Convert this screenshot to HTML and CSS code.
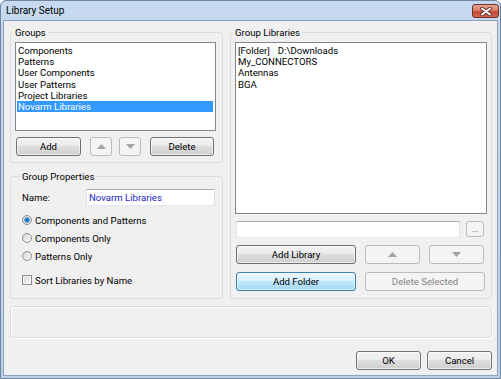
FILE: index.html
```html
<!DOCTYPE html>
<html lang="en">
  <head>
    <meta charset="UTF-8" />
    <title>Library Setup</title>
    <link rel="stylesheet" href="styles.css">
  </head>
  <body>
    <div class="window">
      <div class="titlebar">
        <span class="title">Library Setup</span>
        <button class="close-btn">
          <svg width="12" height="9" viewBox="0 0 12 9">
            <path d="M2 1.5 L10 7.5 M10 1.5 L2 7.5" stroke="#5a2a24" stroke-width="3.6" stroke-linecap="round" />
            <path d="M2 1.5 L10 7.5 M10 1.5 L2 7.5" stroke="#fff" stroke-width="2" stroke-linecap="round" />
          </svg>
        </button>
      </div>

      <div class="client">
        <div class="main">
          <div class="left-col">
            <fieldset class="group groups-box">
              <legend>Groups</legend>
              <ul class="listbox groups-list">
                <li>Components</li>
                <li>Patterns</li>
                <li>User Components</li>
                <li>User Patterns</li>
                <li>Project Libraries</li>
                <li class="selected">Novarm Libraries</li>
              </ul>
              <div class="groups-buttons">
                <button class="btn btn-add">Add</button>
                <button class="btn btn-disabled btn-arrow">
                  <svg width="9" height="5" viewBox="0 0 9 5"><polygon points="0,5 9,5 4.5,0" fill="#a3a3a3" /></svg>
                </button>
                <button class="btn btn-disabled btn-arrow">
                  <svg width="9" height="5" viewBox="0 0 9 5"><polygon points="0,0 9,0 4.5,5" fill="#a3a3a3" /></svg>
                </button>
                <button class="btn btn-delete">Delete</button>
              </div>
            </fieldset>

            <fieldset class="group props-box">
              <legend>Group Properties</legend>
              <div class="name-row">
                <span class="name-label">Name:</span>
                <input class="textbox name-input" type="text" value="Novarm Libraries" />
              </div>
              <div class="options">
                <div class="option"><span class="radio checked"></span>Components and Patterns</div>
                <div class="option"><span class="radio"></span>Components Only</div>
                <div class="option"><span class="radio"></span>Patterns Only</div>
              </div>
              <div class="option sort-option"><span class="checkbox"></span>Sort Libraries by Name</div>
            </fieldset>
          </div>

          <fieldset class="group libs-box">
            <legend>Group Libraries</legend>
            <ul class="listbox libs-list">
              <li>[Folder]<span class="folder-path">D:\Downloads</span></li>
              <li>My_CONNECTORS</li>
              <li>Antennas</li>
              <li>BGA</li>
            </ul>
            <div class="path-row">
              <input class="textbox path-input" type="text" value="" />
              <button class="btn btn-disabled btn-browse">...</button>
            </div>
            <div class="libs-buttons">
              <button class="btn btn-wide">Add Library</button>
              <button class="btn btn-disabled btn-move">
                <svg width="9" height="5" viewBox="0 0 9 5"><polygon points="0,5 9,5 4.5,0" fill="#a3a3a3" /></svg>
              </button>
              <button class="btn btn-disabled btn-move">
                <svg width="9" height="5" viewBox="0 0 9 5"><polygon points="0,0 9,0 4.5,5" fill="#a3a3a3" /></svg>
              </button>
            </div>
            <div class="libs-buttons second">
              <button class="btn btn-wide btn-focus">Add Folder</button>
              <button class="btn btn-disabled btn-wide">Delete Selected</button>
            </div>
          </fieldset>
        </div>

        <div class="status-panel"></div>

        <div class="dialog-buttons">
          <button class="btn btn-dialog">OK</button>
          <button class="btn btn-dialog">Cancel</button>
        </div>
      </div>
    </div>
  </body>
</html>
```

FILE: styles.css
```css
* {
  box-sizing: border-box;
}
body {
  margin: 0;
  font-family: Roboto, "Liberation Sans", sans-serif;
  font-size: 9.6px;
  color: #000;
  background: #fff;
}
.window {
  width: 501px;
  height: 379px;
  display: flex;
  flex-direction: column;
  padding: 0 2px 2px;
  background: linear-gradient(#c6d9ee, #bcd2ea);
  border: 1px solid #6f859e;
  border-radius: 6px 6px 0 0;
}
.titlebar {
  height: 19px;
  display: flex;
  justify-content: space-between;
  align-items: flex-start;
  padding-left: 3px;
}
.title {
  font-size: 10px;
  line-height: 19px;
}
.close-btn {
  width: 27px;
  height: 14px;
  margin-top: 3px;
  margin-right: -1px;
  padding: 0;
  display: flex;
  align-items: center;
  justify-content: center;
  border: 1px solid #6e3128;
  border-radius: 3px;
  background: linear-gradient(#e9a595, #d97c68 45%, #c54b35 55%, #d0654f);
}
.client {
  flex: 1;
  background: #f0f0f0;
  border: 1px solid #8ea3bb;
  padding: 5px 5px 0 6px;
}
.main {
  display: grid;
  grid-template-columns: 213px 262px;
  column-gap: 7px;
}
.left-col {
  display: flex;
  flex-direction: column;
  gap: 7px;
}
.group {
  margin: 0;
  min-width: 0;
  border: 1px solid #d5dfe5;
  border-radius: 3px;
}
.group legend {
  padding: 0 2px;
  margin-left: -2px;
  line-height: 13px;
}
.groups-box {
  padding: 3px 6px 6px 4px;
}
.listbox {
  list-style: none;
  margin: 0;
  padding: 2px 1px;
  background: #fff;
  border: 1px solid #828790;
  overflow: hidden;
}
.listbox li {
  height: 11.2px;
  line-height: 11.2px;
  padding-left: 1px;
  white-space: nowrap;
}
.listbox li.selected {
  background: #3399ff;
  color: #fff;
  margin-right: 1px;
}
.groups-list {
  height: 89px;
}
.groups-buttons {
  display: flex;
  margin-top: 6px;
  padding-left: 1px;
}
.btn {
  height: 19px;
  padding: 0;
  font: inherit;
  color: #000;
  border: 1px solid #707070;
  border-radius: 3px;
  background: linear-gradient(#f2f2f2, #ebebeb 45%, #dddddd 50%, #cfcfcf);
  box-shadow: inset 0 0 0 1px rgba(255, 255, 255, 0.6);
  display: flex;
  align-items: center;
  justify-content: center;
}
.btn-disabled {
  color: #838383;
  border-color: #b8bcbf;
  background: #f4f4f4;
  box-shadow: none;
}
.btn-focus {
  border-color: #3c7fb1;
  background: linear-gradient(#eaf6fd, #d9f0fc 45%, #bee6fd 50%, #a7d9f5);
  box-shadow: inset 0 0 0 1px rgba(255, 255, 255, 0.5);
}
.btn-add {
  width: 65px;
}
.btn-arrow {
  width: 22px;
  margin-left: 9px;
}
.btn-arrow + .btn-arrow {
  margin-left: 7px;
}
.btn-delete {
  width: 64px;
  margin-left: 9px;
}
.props-box {
  padding: 6px 6px 9px 11px;
}
.name-row {
  display: flex;
  align-items: center;
}
.name-label {
  width: 64px;
}
.textbox {
  height: 17px;
  margin: 0;
  padding: 0 2px;
  font: inherit;
  background: #fff;
  border: 1px solid #abadb3;
  border-color: #abadb3 #dbdfe6 #e3e9ef #e2e3ea;
  outline: none;
}
.name-input {
  width: 129px;
  color: #2323c8;
}
.options {
  margin-top: 5px;
}
.option {
  display: flex;
  align-items: center;
  gap: 3px;
  height: 18px;
}
.sort-option {
  margin-top: 6px;
}
.radio {
  width: 10px;
  height: 10px;
  border-radius: 50%;
  border: 1px solid #8e8f8f;
  background: linear-gradient(135deg, #d4d4d4, #fbfbfb);
}
.radio.checked {
  background: radial-gradient(circle, #10609f 0, #3d95d8 2.2px, #dcdcdc 3.2px, #f6f6f6 100%);
}
.checkbox {
  width: 10px;
  height: 10px;
  border: 1px solid #8e8f8f;
  background: linear-gradient(135deg, #d4d4d4, #fbfbfb);
  box-shadow: inset 0 0 0 1px #f4f4f4;
}
.libs-box {
  padding: 3px 4px 5px 4px;
}
.libs-list {
  height: 172px;
}
.folder-path {
  margin-left: 8px;
}
.path-row {
  display: flex;
  gap: 6px;
  margin-top: 7px;
  padding: 0 3px 0 1px;
}
.path-input {
  flex: 1;
}
.btn-browse {
  width: 18px;
  height: 16px;
  color: #555;
  font-size: 8px;
}
.libs-buttons {
  display: flex;
  gap: 9px;
  margin-top: 7px;
  padding-left: 1px;
}
.libs-buttons.second {
  margin-top: 8px;
}
.btn-wide {
  width: 120px;
}
.btn-move {
  width: 55px;
}
.status-panel {
  height: 32px;
  margin-top: 7px;
  border: 1px solid #d9dde0;
  border-radius: 3px;
  box-shadow: inset 1px 1px 0 #fff, 1px 1px 0 #fff;
}
.dialog-buttons {
  display: flex;
  justify-content: flex-end;
  gap: 6px;
  margin-top: 13px;
}
.btn-dialog {
  width: 65px;
}
```
